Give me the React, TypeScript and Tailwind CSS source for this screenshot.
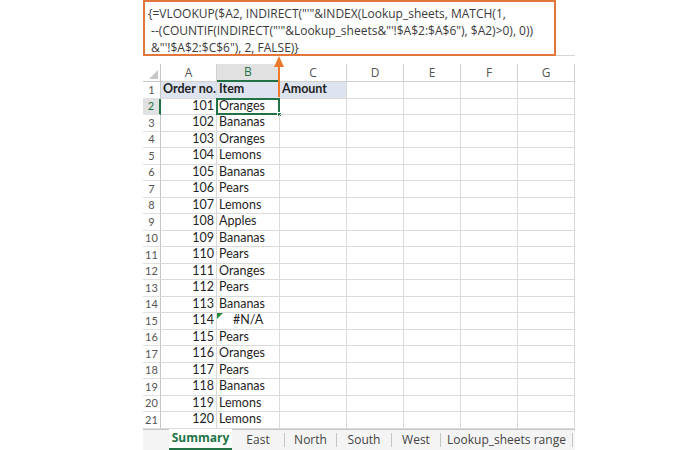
import React from 'react';

const cols = [
  { key: 'A', w: 'w-[56px]' },
  { key: 'B', w: 'w-[63px]' },
  { key: 'C', w: 'w-[67px]' },
  { key: 'D', w: 'w-[57px]' },
  { key: 'E', w: 'w-[57px]' },
  { key: 'F', w: 'w-[57px]' },
  { key: 'G', w: 'w-[57px]' },
];

const items = [
  'Oranges', 'Bananas', 'Oranges', 'Lemons', 'Bananas', 'Pears', 'Lemons', 'Apples',
  'Bananas', 'Pears', 'Oranges', 'Pears', 'Bananas', '#N/A', 'Pears', 'Oranges',
  'Pears', 'Bananas', 'Lemons', 'Lemons',
];

const tabs = [
  { name: 'East', w: 'w-[53px]' },
  { name: 'North', w: 'w-[52px]' },
  { name: 'South', w: 'w-[55px]' },
  { name: 'West', w: 'w-[49px]' },
  { name: 'Lookup_sheets range', w: 'w-[132px]' },
];

function Row({ n, a, b, header }: { n: number; a: string; b: string; header?: boolean }) {
  const active = n === 2;
  const err = b === '#N/A';
  return (
    <div className="flex h-[16.5px]">
      <div
        className={`w-[18px] flex items-center justify-center text-[11px] border-b border-[#e1e1e1] ${
          active ? 'bg-[#e1e1e1] text-[#217346] border-r-2 border-r-[#217346]' : 'text-[#555] border-r border-r-[#c6c6c6]'
        }`}
      >
        {n}
      </div>
      {cols.map((c, i) => {
        const blue = header && i < 3;
        let text = '';
        if (i === 0) text = a;
        if (i === 1) text = b;
        if (i === 2 && header) text = 'Amount';
        return (
          <div
            key={c.key}
            className={`${c.w} relative flex items-center border-r border-b border-[#dadada] px-[2px] overflow-visible whitespace-nowrap text-[12.5px] text-[#1f1f1f] ${
              blue ? 'bg-[#dde4f0] font-bold' : ''
            } ${i === 0 && !header ? 'justify-end' : ''} ${err && i === 1 ? 'justify-center' : ''}`}
          >
            {text}
            {err && i === 1 && (
              <span className="absolute left-0 top-0 w-0 h-0 border-t-[6px] border-t-[#2b8a3e] border-r-[6px] border-r-transparent" />
            )}
            {active && i === 1 && (
              <>
                <span className="absolute -left-px -top-px -right-px -bottom-px border-2 border-[#217346]" />
                <span className="absolute -right-[3px] -bottom-[3px] w-[5px] h-[5px] bg-[#217346] border border-white" />
              </>
            )}
          </div>
        );
      })}
    </div>
  );
}

export default function App() {
  return (
    <div className="w-[700px] h-[450px] bg-white relative overflow-hidden font-['Lato',sans-serif]">
      <div className="ml-[143px] w-[432px] flex flex-col">
        {/* formula bar */}
        <div className="h-[56px] border-b border-[#d6d6d6]">
          <div className="w-[413px] h-[56px] border-2 border-[#e2773c] bg-white pl-[3px] pt-[3px] font-['Open_Sans',sans-serif] text-[12px] leading-[17px] text-[#3a3a3a] whitespace-pre">
            <div>{`{=VLOOKUP($A2, INDIRECT("'"&INDEX(Lookup_sheets, MATCH(1,`}</div>
            <div>{` --(COUNTIF(INDIRECT("'"&Lookup_sheets&"'!$A$2:$A$6"), $A2)>0), 0))`}</div>
            <div>{` &"'!$A$2:$C$6"), 2, FALSE)}`}</div>
          </div>
        </div>
        <div className="h-[8px]" />

        {/* column headers */}
        <div className="flex h-[18px] font-['Open_Sans',sans-serif] text-[12px] text-[#555]">
          <div className="w-[18px] relative border-r border-b border-[#c6c6c6]">
            <span className="absolute right-[2px] bottom-[2px] w-0 h-0 border-l-[9px] border-l-transparent border-b-[9px] border-b-[#c8c8c8]" />
          </div>
          {cols.map((c) =>
            c.key === 'B' ? (
              <div
                key={c.key}
                className={`${c.w} flex items-center justify-center bg-[#e1e1e1] border-r border-[#c6c6c6] border-b-2 border-b-[#217346] text-[#217346]`}
              >
                {c.key}
              </div>
            ) : (
              <div key={c.key} className={`${c.w} flex items-center justify-center border-r border-b border-[#d0d0d0]`}>
                {c.key}
              </div>
            )
          )}
        </div>

        <Row n={1} a="Order no." b="Item" header />
        {items.map((it, i) => (
          <Row key={i} n={i + 2} a={String(101 + i)} b={it} />
        ))}

        {/* sheet tabs */}
        <div className="flex h-[21px] bg-[#f4f4f4] border-t border-[#c6c6c6] font-['Open_Sans',sans-serif] text-[12px] text-[#444]">
          <div className="w-[26px]" />
          <div className="w-[63px] bg-white flex items-center justify-center font-bold text-[#217346] border-b-2 border-[#217346] -mt-px">
            Summary
          </div>
          {tabs.map((t) => (
            <div key={t.name} className={`${t.w} flex items-center justify-center`}>
              <span className="flex-1 text-center">{t.name}</span>
              <span className="w-px h-[14px] bg-[#c6c6c6]" />
            </div>
          ))}
        </div>
      </div>

      {/* arrow */}
      <svg className="absolute left-[273px] top-[55px]" width="12" height="42" viewBox="0 0 12 42">
        <polygon points="6,1 11,12 1,12" fill="#ef7a2e" />
        <line x1="6" y1="10" x2="6" y2="42" stroke="#ef7a2e" strokeWidth="2" />
      </svg>
    </div>
  );
}
